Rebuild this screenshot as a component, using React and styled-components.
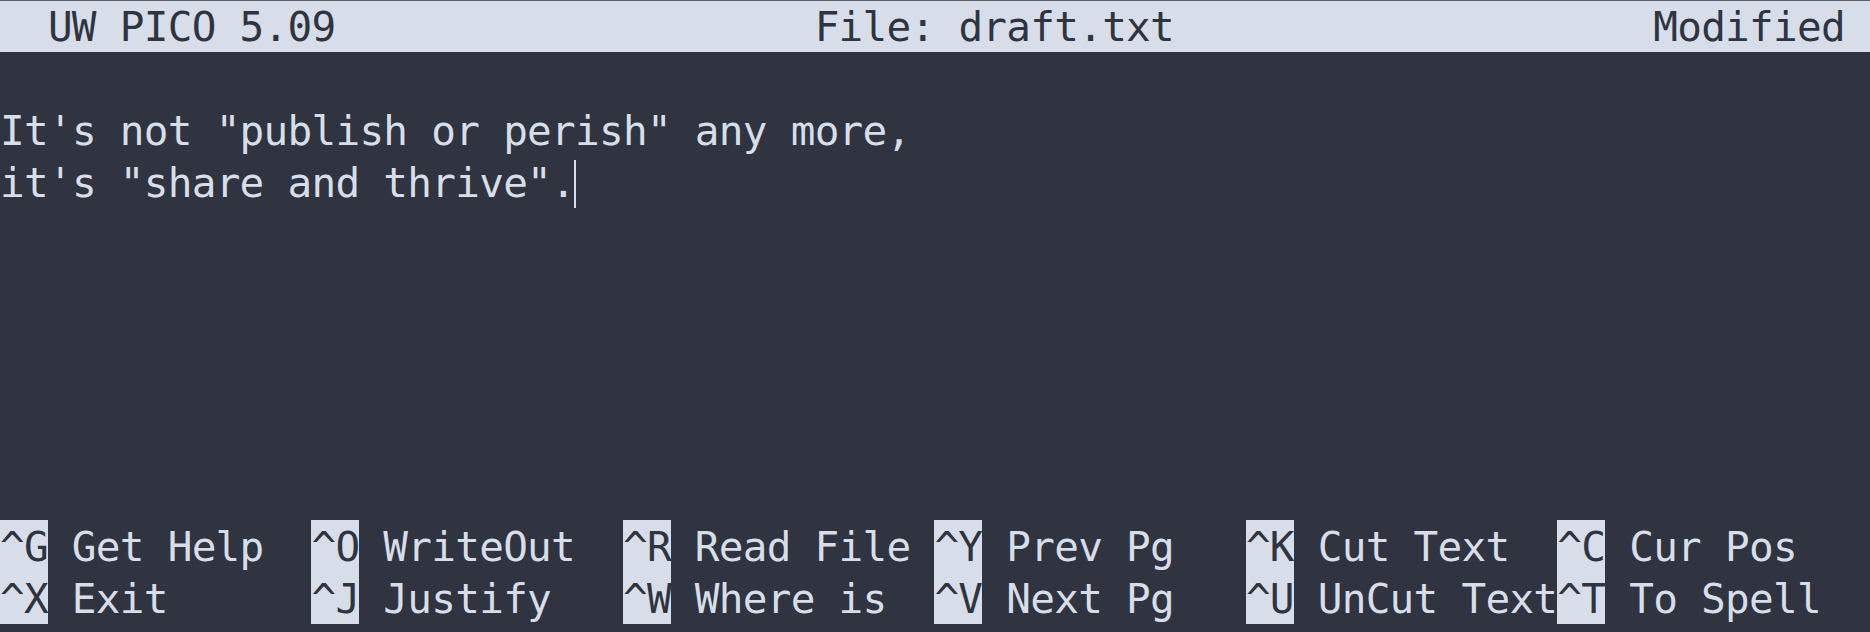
import React from "react";
import styled, { createGlobalStyle } from "styled-components";

const CW = 23.96; // terminal cell width (px)
const LH = 52; // terminal cell height (px)
const FG = "#d8dee9";
const BG = "#2f3440";
const INK = "#2e3440";

const Global = createGlobalStyle`
  html, body {
    margin: 0;
    padding: 0;
    background: ${BG};
  }
  body {
    font-family: "DejaVu Sans Mono", "Liberation Mono", monospace;
  }
`;

const Terminal = styled.div`
  width: 1870px;
  height: 632px;
  overflow: hidden;
  display: flex;
  flex-direction: column;
  background: ${BG};
  color: ${FG};
  font-family: "DejaVu Sans Mono", "Liberation Mono", monospace;
  font-size: 41px;
  letter-spacing: ${CW - 41 * 0.60205}px;
  line-height: ${LH + 3}px;
  white-space: pre;
`;

const TitleBar = styled.header`
  height: ${LH}px;
  flex: none;
  display: grid;
  grid-template-columns: ${32 * CW}px ${35 * CW}px ${8 * CW}px;
  padding-left: ${2 * CW}px;
  background: ${FG};
  color: ${INK};
  box-shadow: inset 0 1px 0 #5b5f68;
  overflow: hidden;
`;

const TitleCell = styled.span``;

const Editor = styled.main`
  height: ${9 * LH}px;
  flex: none;
  display: flex;
  flex-direction: column;
`;

const MessageLine = styled.div`
  height: ${LH}px;
`;

const TextLine = styled.div`
  height: ${LH}px;
  display: flex;
`;

const Cursor = styled.span`
  align-self: flex-end;
  width: 2px;
  height: 48px;
  margin-left: -1px;
  background: ${FG};
`;

const Shortcuts = styled.footer`
  flex: none;
  display: grid;
  grid-template-columns: repeat(6, ${13 * CW}px);
  grid-auto-flow: column;
  grid-template-rows: repeat(2, ${LH}px);
`;

const Shortcut = styled.div`
  display: flex;
  height: ${LH}px;
  align-items: stretch;
`;

const Key = styled.span`
  width: ${2 * CW}px;
  height: ${LH}px;
  overflow: hidden;
  background: ${FG};
  color: ${INK};
`;

const Label = styled.span`
  margin-left: ${CW}px;
`;

const shortcuts = [
  ["^G", "Get Help"],
  ["^X", "Exit"],
  ["^O", "WriteOut"],
  ["^J", "Justify"],
  ["^R", "Read File"],
  ["^W", "Where is"],
  ["^Y", "Prev Pg"],
  ["^V", "Next Pg"],
  ["^K", "Cut Text"],
  ["^U", "UnCut Text"],
  ["^C", "Cur Pos"],
  ["^T", "To Spell"],
];

const lines = [`It's not "publish or perish" any more,`, `it's "share and thrive".`];

export default function App() {
  return (
    <>
      <Global />
      <Terminal>
        <TitleBar>
          <TitleCell>UW PICO 5.09</TitleCell>
          <TitleCell>File: draft.txt</TitleCell>
          <TitleCell>Modified</TitleCell>
        </TitleBar>
        <Editor>
          <MessageLine />
          {lines.map((l, i) => (
            <TextLine key={i}>
              <span>{l}</span>
              {i === lines.length - 1 && <Cursor />}
            </TextLine>
          ))}
        </Editor>
        <Shortcuts>
          {shortcuts.map(([k, label]) => (
            <Shortcut key={k}>
              <Key>{k}</Key>
              <Label>{label}</Label>
            </Shortcut>
          ))}
        </Shortcuts>
      </Terminal>
    </>
  );
}
